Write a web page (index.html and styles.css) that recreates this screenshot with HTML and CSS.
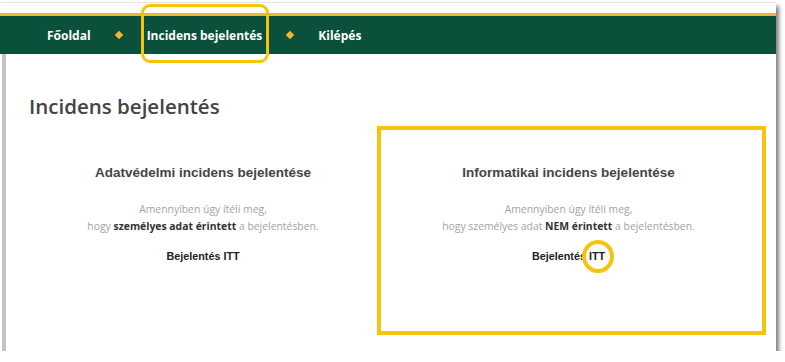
FILE: index.html
```html
<!DOCTYPE html>
<html lang="hu">
<head>
<meta charset="utf-8">
<title>Incidens bejelentés</title>
<link rel="stylesheet" href="styles.css">
</head>
<body>
<div class="frame">
  <div class="topstrip"></div>
  <nav class="nav">
    <a class="nav-link">Főoldal</a>
    <span class="dot"></span>
    <a class="nav-link active">Incidens bejelentés<span class="mark-rect"></span></a>
    <span class="dot"></span>
    <a class="nav-link">Kilépés</a>
  </nav>
  <main class="content">
    <h1 class="title">Incidens bejelentés</h1>
    <div class="cols">
      <section class="col">
        <h2 class="col-title">Adatvédelmi incidens bejelentése</h2>
        <p class="desc">Amennyiben úgy ítéli meg,<br>hogy <b>személyes adat érintett</b> a bejelentésben.</p>
        <p class="link">Bejelentés ITT</p>
      </section>
      <section class="col col-marked">
        <h2 class="col-title">Informatikai incidens bejelentése</h2>
        <p class="desc">Amennyiben úgy ítéli meg,<br>hogy személyes adat <b>NEM érintett</b> a bejelentésben.</p>
        <p class="link">Bejelentés <span class="itt">ITT<span class="mark-circle"></span></span></p>
      </section>
    </div>
  </main>
</div>
</body>
</html>
```
FILE: styles.css
```css
html, body {
  margin: 0;
  padding: 0;
  background: #fff;
}
.frame {
  margin: 2px 0 0 0;
  width: 776px;
  height: 348px;
  border-top: 1px solid #e4e4e4;
  box-shadow: 3px 4px 4px rgba(0,0,0,0.5);
  background: #fff;
  display: flex;
  flex-direction: column;
  position: relative;
}
.topstrip {
  height: 10px;
  border-bottom: 3px solid #f2b632;
}
.nav {
  height: 38px;
  background: #0b503b;
  display: flex;
  align-items: center;
  padding-left: 47px;
  font-family: "Open Sans", sans-serif;
  font-weight: 700;
  font-size: 12px;
  color: #fff;
}
.nav-link {
  position: relative;
  color: #fff;
}
.dot {
  width: 6px;
  height: 6px;
  background: #f2b632;
  transform: rotate(45deg);
  margin: 0 25px 0 25px;
}
.mark-rect {
  position: absolute;
  left: -6px;
  top: -23px;
  width: 122px;
  height: 53px;
  border: 3px solid #f8c30c;
  border-radius: 9px;
}
.content {
  flex: 1;
  display: flex;
  flex-direction: column;
  border-left: 4px solid #c4c4c4;
  margin-left: 2px;
  padding-left: 23px;
}
.title {
  margin: 38px 0 0 0;
  font-family: "Open Sans", sans-serif;
  font-weight: 600;
  font-size: 20.5px;
  color: #444;
  line-height: 28px;
}
.cols {
  display: grid;
  grid-template-columns: 348px 389px;
  margin-top: 6px;
}
.col {
  text-align: center;
  height: 209px;
  box-sizing: border-box;
  padding-top: 38px;
}
.col-marked {
  border: 4px solid #f8c30c;
  padding-top: 34px;
  padding-right: 6px;
}
.col-title {
  margin: 0;
  font-family: "Liberation Sans", Arial, sans-serif;
  font-weight: 700;
  font-size: 13.5px;
  color: #454545;
  line-height: 18px;
}
.desc {
  margin: 19px 0 0 0;
  font-family: "Open Sans", sans-serif;
  font-size: 10.4px;
  line-height: 17px;
  color: #a3a3a3;
}
.desc b {
  color: #333;
  font-weight: 700;
}
.link {
  margin: 15px 0 0 0;
  font-family: "Liberation Sans", Arial, sans-serif;
  font-weight: 700;
  font-size: 10.8px;
  color: #222;
}
.itt {
  position: relative;
}
.mark-circle {
  position: absolute;
  left: -7px;
  top: -10px;
  width: 24px;
  height: 25px;
  border: 4px solid #f8c30c;
  border-radius: 50%;
}
```
